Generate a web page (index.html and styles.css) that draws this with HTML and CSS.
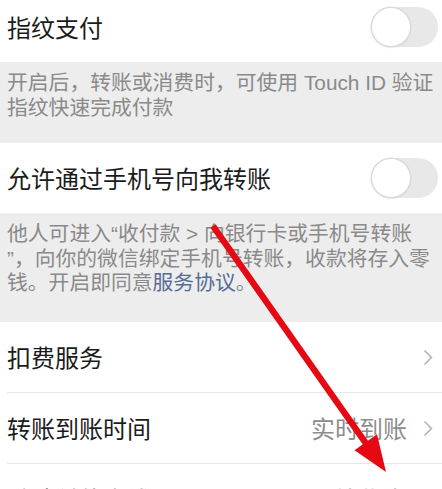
FILE: index.html
```html
<!DOCTYPE html>
<html lang="zh-CN">
<head>
<meta charset="utf-8">
<title>支付管理</title>
<link rel="stylesheet" href="styles.css">
</head>
<body>
<div class="page">
  <div class="cell first">
    <span class="title">指纹支付</span>
    <span class="switch"><span class="knob"></span></span>
  </div>
  <div class="tip short">
    <span class="ln">开启后，转账或消费时，可使用 Touch ID 验证</span>
    <span class="ln">指纹快速完成付款</span>
  </div>
  <div class="cell">
    <span class="title">允许通过手机号向我转账</span>
    <span class="switch"><span class="knob"></span></span>
  </div>
  <div class="tip tall">
    <span class="ln">他人可进入“收付款 &gt; 向银行卡或手机号转账</span>
    <span class="ln">”，向你的微信绑定手机号转账，收款将存入零</span>
    <span class="ln">钱。开启即同意<a class="link">服务协议</a>。</span>
  </div>
  <div class="group">
    <div class="cell nav">
      <span class="title">扣费服务</span>
      <svg class="chev" viewBox="0 0 10 17" width="10" height="17"><path d="M1.5 1.5 L8.5 8.5 L1.5 15.5" fill="none" stroke="#b4b4b4" stroke-width="1.6"/></svg>
    </div>
    <div class="cell nav">
      <span class="title">转账到账时间</span>
      <span class="value">实时到账</span>
      <svg class="chev" viewBox="0 0 10 17" width="10" height="17"><path d="M1.5 1.5 L8.5 8.5 L1.5 15.5" fill="none" stroke="#b4b4b4" stroke-width="1.6"/></svg>
    </div>
    <div class="cell nav">
      <span class="title">默认付款方式</span>
      <span class="value">零钱优先</span>
      <svg class="chev" viewBox="0 0 10 17" width="10" height="17"><path d="M1.5 1.5 L8.5 8.5 L1.5 15.5" fill="none" stroke="#b4b4b4" stroke-width="1.6"/></svg>
    </div>
  </div>
  <svg class="arrow" viewBox="0 0 442 489" width="442" height="489">
    <line x1="213" y1="226" x2="372" y2="452" stroke="#e50914" stroke-width="6.5"/>
    <polygon points="386,472 354.5,450.3 377,434.3" fill="#e50914"/>
  </svg>
</div>
</body>
</html>
```

FILE: styles.css
```css
html, body {
  margin: 0;
  padding: 0;
  background: #ffffff;
}

.page {
  position: relative;
  width: 442px;
  height: 489px;
  overflow: hidden;
  font-family: "Noto Sans CJK SC", "Noto Sans", sans-serif;
  background: #ffffff;
}

.cell {
  display: flex;
  align-items: center;
  height: 70px;
  padding: 0 4px 0 7px;
  background: #ffffff;
}

.cell.first {
  margin-top: -8px;
}

.title {
  flex: 1;
  font-size: 24px;
  color: #1b1b1b;
  line-height: 30px;
  white-space: nowrap;
}

.switch {
  position: relative;
  width: 66px;
  height: 40px;
  border-radius: 20px;
  background: #e8e8e8;
  flex: none;
}

.knob {
  position: absolute;
  left: 0;
  top: 1px;
  width: 38px;
  height: 38px;
  border-radius: 50%;
  background: #ffffff;
  box-shadow: 0 0 0 1.5px #dadada, 0 1px 3px rgba(0, 0, 0, 0.12);
}

.tip {
  display: flex;
  flex-direction: column;
  box-sizing: border-box;
  background: #ededed;
  color: #8a8a8a;
  font-family: "Liberation Sans", "Noto Sans CJK SC", sans-serif;
  font-size: 20.8px;
  padding: 9px 7px 0;
  white-space: nowrap;
}

.tip.short {
  height: 81px;
}

.tip.tall {
  height: 109px;
}

.ln {
  display: block;
  height: 24.5px;
  line-height: 24.5px;
}

.link {
  color: #576b95;
}

.group .cell {
  margin-left: 7px;
  padding-left: 0;
  padding-right: 9px;
}

.group .cell + .cell {
  border-top: 1px solid #e6e6e6;
}

.value {
  font-size: 24px;
  color: #8c8c8c;
  line-height: 30px;
  margin-right: 16px;
}

.chev {
  flex: none;
  display: block;
}

.arrow {
  position: absolute;
  left: 0;
  top: 0;
  pointer-events: none;
}
```
